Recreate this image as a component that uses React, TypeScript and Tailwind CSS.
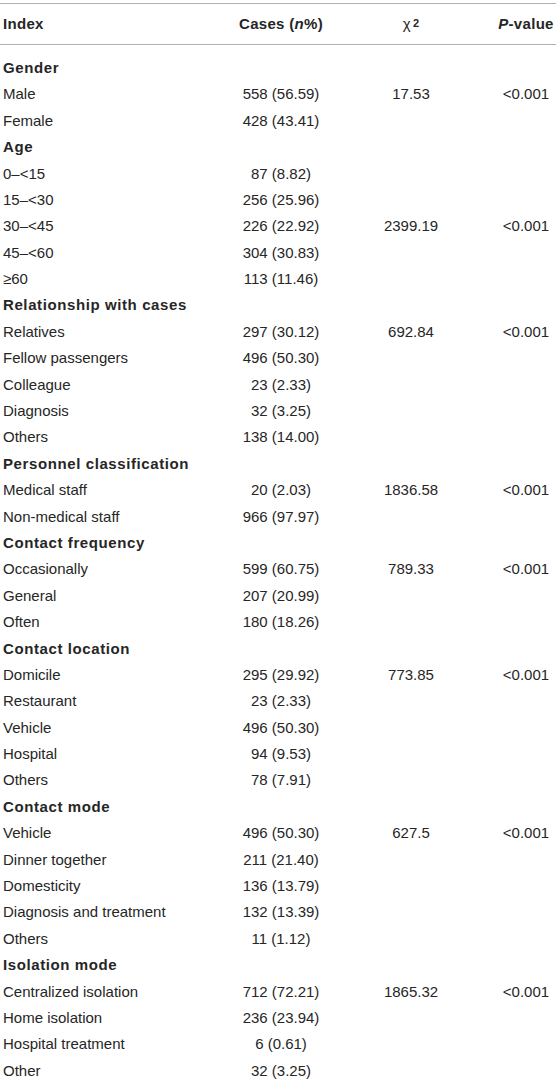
import React from "react";

type Row = { label: string; cases?: string; chi?: string; p?: string; head?: boolean };

const rows: Row[] = [
  { label: "Gender", head: true },
  { label: "Male", cases: "558 (56.59)", chi: "17.53", p: "<0.001" },
  { label: "Female", cases: "428 (43.41)" },
  { label: "Age", head: true },
  { label: "0–<15", cases: "87 (8.82)" },
  { label: "15–<30", cases: "256 (25.96)" },
  { label: "30–<45", cases: "226 (22.92)", chi: "2399.19", p: "<0.001" },
  { label: "45–<60", cases: "304 (30.83)" },
  { label: "≥60", cases: "113 (11.46)" },
  { label: "Relationship with cases", head: true },
  { label: "Relatives", cases: "297 (30.12)", chi: "692.84", p: "<0.001" },
  { label: "Fellow passengers", cases: "496 (50.30)" },
  { label: "Colleague", cases: "23 (2.33)" },
  { label: "Diagnosis", cases: "32 (3.25)" },
  { label: "Others", cases: "138 (14.00)" },
  { label: "Personnel classification", head: true },
  { label: "Medical staff", cases: "20 (2.03)", chi: "1836.58", p: "<0.001" },
  { label: "Non-medical staff", cases: "966 (97.97)" },
  { label: "Contact frequency", head: true },
  { label: "Occasionally", cases: "599 (60.75)", chi: "789.33", p: "<0.001" },
  { label: "General", cases: "207 (20.99)" },
  { label: "Often", cases: "180 (18.26)" },
  { label: "Contact location", head: true },
  { label: "Domicile", cases: "295 (29.92)", chi: "773.85", p: "<0.001" },
  { label: "Restaurant", cases: "23 (2.33)" },
  { label: "Vehicle", cases: "496 (50.30)" },
  { label: "Hospital", cases: "94 (9.53)" },
  { label: "Others", cases: "78 (7.91)" },
  { label: "Contact mode", head: true },
  { label: "Vehicle", cases: "496 (50.30)", chi: "627.5", p: "<0.001" },
  { label: "Dinner together", cases: "211 (21.40)" },
  { label: "Domesticity", cases: "136 (13.79)" },
  { label: "Diagnosis and treatment", cases: "132 (13.39)" },
  { label: "Others", cases: "11 (1.12)" },
  { label: "Isolation mode", head: true },
  { label: "Centralized isolation", cases: "712 (72.21)", chi: "1865.32", p: "<0.001" },
  { label: "Home isolation", cases: "236 (23.94)" },
  { label: "Hospital treatment", cases: "6 (0.61)" },
  { label: "Other", cases: "32 (3.25)" },
];

const grid = "grid grid-cols-[224px_114px_158px_60px] items-center";

export default function App() {
  return (
    <div
      className="w-[556px] h-[1080px] overflow-hidden bg-white text-[15px] text-[#262626]"
      style={{ fontFamily: '"Liberation Sans", Arial, sans-serif' }}
    >
      <div className="mt-[3px] border-t border-[#b0b0b0]" />
      <div className={`${grid} h-[40px] font-bold tracking-[0.3px]`}>
        <div className="pl-[3px]">Index</div>
        <div className="text-center">
          Cases (<span className="italic">n</span>%)
        </div>
        <div className="text-center pr-[12px]">
          <span className="font-normal">χ</span>
          <sup className="text-[11px] relative -top-[2px] ml-[2px]">2</sup>
        </div>
        <div className="text-center">
          <span className="italic">P</span>-value
        </div>
      </div>
      <div className="border-t border-[#b0b0b0]" />
      <div className="pt-[10px]">
        {rows.map((r, i) => (
          <div key={i} className={`${grid} h-[26.4px]`}>
            <div className={`pl-[3px] whitespace-nowrap ${r.head ? "font-bold tracking-[0.6px]" : ""}`}>
              {r.label}
            </div>
            <div className="text-center">{r.cases ?? ""}</div>
            <div className="text-center pr-[12px]">{r.chi ?? ""}</div>
            <div className="text-center">{r.p ?? ""}</div>
          </div>
        ))}
      </div>
    </div>
  );
}
